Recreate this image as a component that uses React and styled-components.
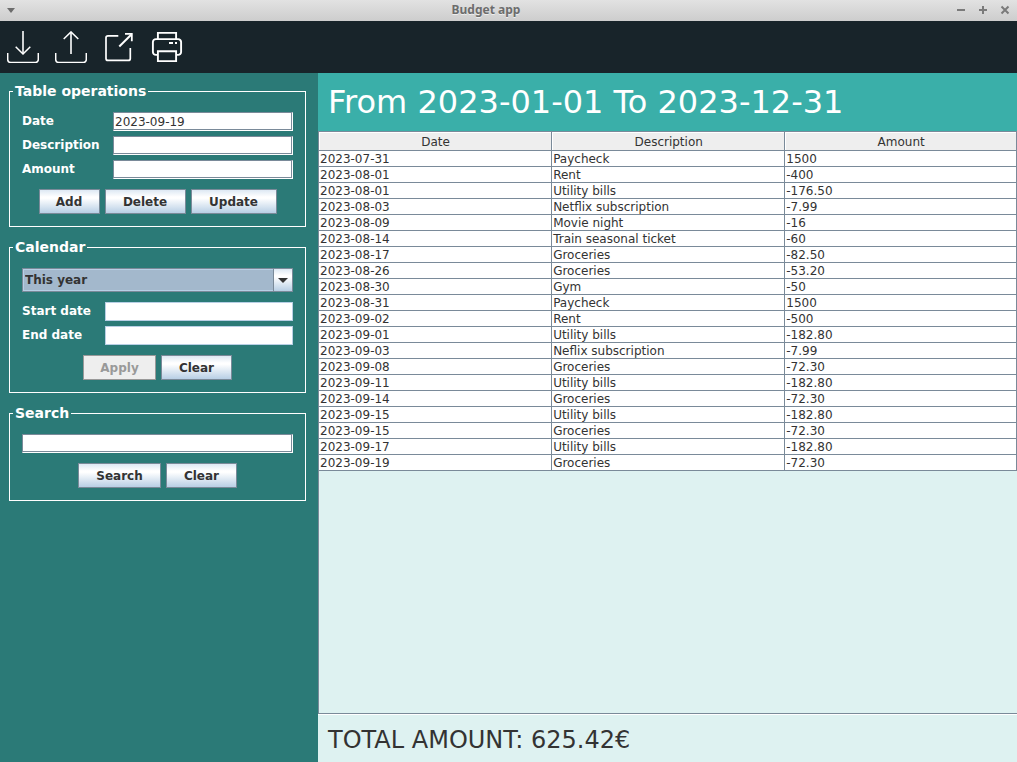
import React from "react";
import styled, { createGlobalStyle } from "styled-components";

const GlobalStyle = createGlobalStyle`
  * { box-sizing: border-box; }
  body { margin: 0; }
  body, button, input, select {
    font-family: "DejaVu Sans", "Liberation Sans", sans-serif;
    font-size: 12px;
    color: #333333;
  }
`;

const Window = styled.div`
  display: flex;
  flex-direction: column;
  min-height: 100vh;
`;

const TitleBar = styled.header`
  display: grid;
  grid-template-columns: auto 1fr auto;
  align-items: center;
  height: 21px;
  padding: 0 6px 1px 5px;
  background: linear-gradient(#e2e2e2, #cdcdcd);
`;

const WindowTitle = styled.span`
  font-family: "Noto Sans", sans-serif;
  font-size: 12px;
  font-weight: 700;
  line-height: 20px;
  text-align: center;
  color: #6c6c6c;
  text-shadow: 0 1px 0 #eeeeee;
`;

const WindowControls = styled.div`
  display: flex;
  gap: 10px;
`;

const PlainButton = styled.button`
  display: block;
  padding: 0;
  border: 0;
  background: none;
  line-height: 0;
`;

const Toolbar = styled.nav`
  display: flex;
  gap: 16px;
  padding: 10px 7px;
  background: #18242a;
`;

const Main = styled.main`
  display: flex;
  flex: 1;
`;

const Sidebar = styled.aside`
  display: flex;
  flex-direction: column;
  gap: 11px;
  flex: 0 0 318px;
  padding: 9px 12px 9px 9px;
  background: #2b7a77;
`;

const Group = styled.fieldset`
  margin: 0;
  padding: 12px;
  border: 1px solid #ffffff;
  min-width: 0;
`;

const Legend = styled.legend`
  margin-left: -9px;
  padding: 0 2px;
  font-size: 14px;
  font-weight: 700;
  line-height: 18px;
  color: #ffffff;
`;

const GroupForm = styled.form`
  display: flex;
  flex-direction: column;
  gap: 10px;
`;

const Fields = styled.div`
  display: grid;
  grid-template-columns: ${(p) => p.$labelWidth}px 1fr;
  align-items: center;
  gap: 5px 10px;
`;

const Label = styled.label`
  font-size: 12px;
  font-weight: 700;
  line-height: 19px;
  color: #ffffff;
`;

const TextField = styled.input`
  width: 100%;
  min-width: 0;
  height: 19px;
  padding: 0 1px;
  border: 1px solid;
  border-color: ${(p) =>
    p.$flat ? "#b8cfe5" : "#7a8a99 #ffffff #ffffff #7a8a99"};
  box-shadow: ${(p) => (p.$flat ? "none" : "inset -1px -1px #7a8a99")};
  border-radius: 0;
  outline: 0;
  background: #ffffff;
`;

const ButtonRow = styled.div`
  display: flex;
  justify-content: center;
  gap: 5px;
`;

const PushButton = styled.button`
  min-width: ${(p) => p.$width}px;
  height: 25px;
  padding: 0 8px;
  border: 1px solid #7a8a99;
  border-radius: 0;
  background: linear-gradient(#dde8f3, #ffffff 30%, #ffffff 36%, #b8cfe5);
  font-weight: 700;
  color: #333333;

  &:disabled {
    border-color: #999999;
    background: #eeeeee;
    color: #999999;
  }
`;

const SelectBox = styled.div`
  position: relative;
`;

const Select = styled.select`
  display: block;
  width: 100%;
  height: 24px;
  padding: 0 20px 0 2px;
  border: 1px solid #7a8a99;
  border-radius: 0;
  outline: 0;
  appearance: none;
  background: #a3b8cc;
  box-shadow: inset 0 0 0 1px #b8cfe5;
  font-weight: 700;
`;

const SelectArrow = styled.span`
  position: absolute;
  inset: 0 0 0 auto;
  display: grid;
  place-items: center;
  width: 20px;
  border: 1px solid #7a8a99;
  background: linear-gradient(#dde8f3, #ffffff 30%, #ffffff 36%, #b8cfe5);
  pointer-events: none;
`;

const Content = styled.section`
  display: flex;
  flex: 1;
  flex-direction: column;
  min-width: 0;
  background: #def2f1;
`;

const Period = styled.h1`
  margin: 0;
  padding: 0 10px;
  background: #3aafa9;
  font-size: 32px;
  font-weight: 400;
  line-height: 58px;
  color: #ffffff;
`;

const TablePane = styled.div`
  flex: 1;
  border: solid #7a8a99;
  border-width: 1px 0 1px 1px;
`;

const Table = styled.table`
  width: 100%;
  table-layout: fixed;
  border-collapse: separate;
  border-spacing: 0;
  background: #ffffff;
`;

const HeadCell = styled.th`
  width: ${(p) => p.$width || "auto"};
  padding: 2px 0 0 1px;
  border: solid #7a8a99;
  border-width: 0 1px 1px 0;
  background: #eeeeee;
  box-shadow: inset 1px 1px #ffffff;
  font-weight: 400;
  line-height: 16px;
`;

const Cell = styled.td`
  padding: 1px 1px 0;
  border: solid #7a8a99;
  border-width: 0 1px 1px 0;
  line-height: 14px;
  white-space: nowrap;
`;

const Total = styled.footer`
  padding: 4px 10px 0;
  border-top: 1px solid #ffffff;
  font-size: 24px;
  line-height: 43px;
`;

const rows = [
  ["2023-07-31", "Paycheck", "1500"],
  ["2023-08-01", "Rent", "-400"],
  ["2023-08-01", "Utility bills", "-176.50"],
  ["2023-08-03", "Netflix subscription", "-7.99"],
  ["2023-08-09", "Movie night", "-16"],
  ["2023-08-14", "Train seasonal ticket", "-60"],
  ["2023-08-17", "Groceries", "-82.50"],
  ["2023-08-26", "Groceries", "-53.20"],
  ["2023-08-30", "Gym", "-50"],
  ["2023-08-31", "Paycheck", "1500"],
  ["2023-09-02", "Rent", "-500"],
  ["2023-09-01", "Utility bills", "-182.80"],
  ["2023-09-03", "Neflix subscription", "-7.99"],
  ["2023-09-08", "Groceries", "-72.30"],
  ["2023-09-11", "Utility bills", "-182.80"],
  ["2023-09-14", "Groceries", "-72.30"],
  ["2023-09-15", "Utility bills", "-182.80"],
  ["2023-09-15", "Groceries", "-72.30"],
  ["2023-09-17", "Utility bills", "-182.80"],
  ["2023-09-19", "Groceries", "-72.30"],
];

function ToolIcon({ children }) {
  return (
    <svg
      width="32"
      height="32"
      viewBox="0 0 32 32"
      fill="none"
      stroke="#ffffff"
      strokeWidth="1.5"
      aria-hidden="true"
    >
      {children}
    </svg>
  );
}

const tray = "M.7 22v6.5a3 3 0 0 0 3 3h24.6a3 3 0 0 0 3-3V22";

const tools = [
  {
    name: "Import",
    icon: (
      <>
        <path d="M16 0v22" stroke="#cfd2d3" strokeWidth="2" />
        <path d="M8.7 15.7 16 23l7.3-7.3" />
        <path d={tray} />
      </>
    ),
  },
  {
    name: "Export",
    icon: (
      <>
        <path d="M16 1.5V23" stroke="#cfd2d3" strokeWidth="2" />
        <path d="M8.7 8 16 .9 23.3 8" />
        <path d={tray} />
      </>
    ),
  },
  {
    name: "Open in window",
    icon: (
      <>
        <path
          d="M15.3 4.8H5a2 2 0 0 0-2 2v20.6a2 2 0 0 0 2 2h20.3a2 2 0 0 0 2-2V17"
          strokeWidth="1.7"
        />
        <path d="M16.3 15.5 28.6 3.3" strokeWidth="2" />
        <path d="M22 2.8h6.8v7.4" strokeWidth="1.8" />
      </>
    ),
  },
  {
    name: "Print",
    icon: (
      <g strokeWidth="1.9">
        <path d="M6.9 8V1.9h18.2V8" />
        <path d="M6.5 23.9H4.9a3 3 0 0 1-3-3v-9.8a3 3 0 0 1 3-3h22.2a3 3 0 0 1 3 3v9.8a3 3 0 0 1-3 3h-1.6" />
        <path d="M6.9 20.2h18.2v9.9H6.9z" />
        <path d="M18 12h4M24 12h2" />
      </g>
    ),
  },
];

function Glyph({ d, fill }) {
  return (
    <svg width="12" height="12" viewBox="0 0 12 12" aria-hidden="true">
      <path
        d={d}
        fill={fill ? "#6c6c6c" : "none"}
        stroke={fill ? "none" : "#7a7a7a"}
        strokeWidth="2"
      />
    </svg>
  );
}

export default function App() {
  return (
    <>
      <GlobalStyle />
      <Window>
        <TitleBar>
          <WindowControls>
            <PlainButton aria-label="Window menu">
              <Glyph d="M2 4h8L6 9z" fill />
            </PlainButton>
          </WindowControls>
          <WindowTitle>Budget app</WindowTitle>
          <WindowControls>
            <PlainButton aria-label="Minimize">
              <Glyph d="M2 6h8" />
            </PlainButton>
            <PlainButton aria-label="Maximize">
              <Glyph d="M2 6h8M6 2v8" />
            </PlainButton>
            <PlainButton aria-label="Close">
              <Glyph d="M2.5 2.5l7 7M9.5 2.5l-7 7" />
            </PlainButton>
          </WindowControls>
        </TitleBar>

        <Toolbar>
          {tools.map((tool) => (
            <PlainButton key={tool.name} aria-label={tool.name}>
              <ToolIcon>{tool.icon}</ToolIcon>
            </PlainButton>
          ))}
        </Toolbar>

        <Main>
          <Sidebar>
            <Group>
              <Legend>Table operations</Legend>
              <GroupForm onSubmit={(e) => e.preventDefault()}>
                <Fields $labelWidth={81}>
                  <Label htmlFor="date">Date</Label>
                  <TextField id="date" defaultValue="2023-09-19" />
                  <Label htmlFor="description">Description</Label>
                  <TextField id="description" />
                  <Label htmlFor="amount">Amount</Label>
                  <TextField id="amount" />
                </Fields>
                <ButtonRow>
                  <PushButton type="button" $width={61}>Add</PushButton>
                  <PushButton type="button" $width={81}>Delete</PushButton>
                  <PushButton type="button" $width={86}>Update</PushButton>
                </ButtonRow>
              </GroupForm>
            </Group>

            <Group>
              <Legend>Calendar</Legend>
              <GroupForm onSubmit={(e) => e.preventDefault()}>
                <SelectBox>
                  <Select aria-label="Period" defaultValue="This year">
                    <option>This year</option>
                  </Select>
                  <SelectArrow>
                    <svg width="10" height="5" viewBox="0 0 10 5" aria-hidden="true">
                      <path d="M0 0h10L5 5z" fill="#333333" />
                    </svg>
                  </SelectArrow>
                </SelectBox>
                <Fields $labelWidth={73}>
                  <Label htmlFor="start">Start date</Label>
                  <TextField id="start" $flat />
                  <Label htmlFor="end">End date</Label>
                  <TextField id="end" $flat />
                </Fields>
                <ButtonRow>
                  <PushButton type="button" $width={73} disabled>Apply</PushButton>
                  <PushButton type="button" $width={71}>Clear</PushButton>
                </ButtonRow>
              </GroupForm>
            </Group>

            <Group>
              <Legend>Search</Legend>
              <GroupForm onSubmit={(e) => e.preventDefault()}>
                <TextField aria-label="Search text" />
                <ButtonRow>
                  <PushButton type="button" $width={83}>Search</PushButton>
                  <PushButton type="button" $width={71}>Clear</PushButton>
                </ButtonRow>
              </GroupForm>
            </Group>
          </Sidebar>

          <Content>
            <Period>From 2023-01-01 To 2023-12-31</Period>
            <TablePane>
              <Table>
                <thead>
                  <tr>
                    <HeadCell scope="col" $width="33.4%">Date</HeadCell>
                    <HeadCell scope="col" $width="33.4%">Description</HeadCell>
                    <HeadCell scope="col">Amount</HeadCell>
                  </tr>
                </thead>
                <tbody>
                  {rows.map(([date, description, amount], i) => (
                    <tr key={i}>
                      <Cell>{date}</Cell>
                      <Cell>{description}</Cell>
                      <Cell>{amount}</Cell>
                    </tr>
                  ))}
                </tbody>
              </Table>
            </TablePane>
            <Total>TOTAL AMOUNT: 625.42€</Total>
          </Content>
        </Main>
      </Window>
    </>
  );
}
